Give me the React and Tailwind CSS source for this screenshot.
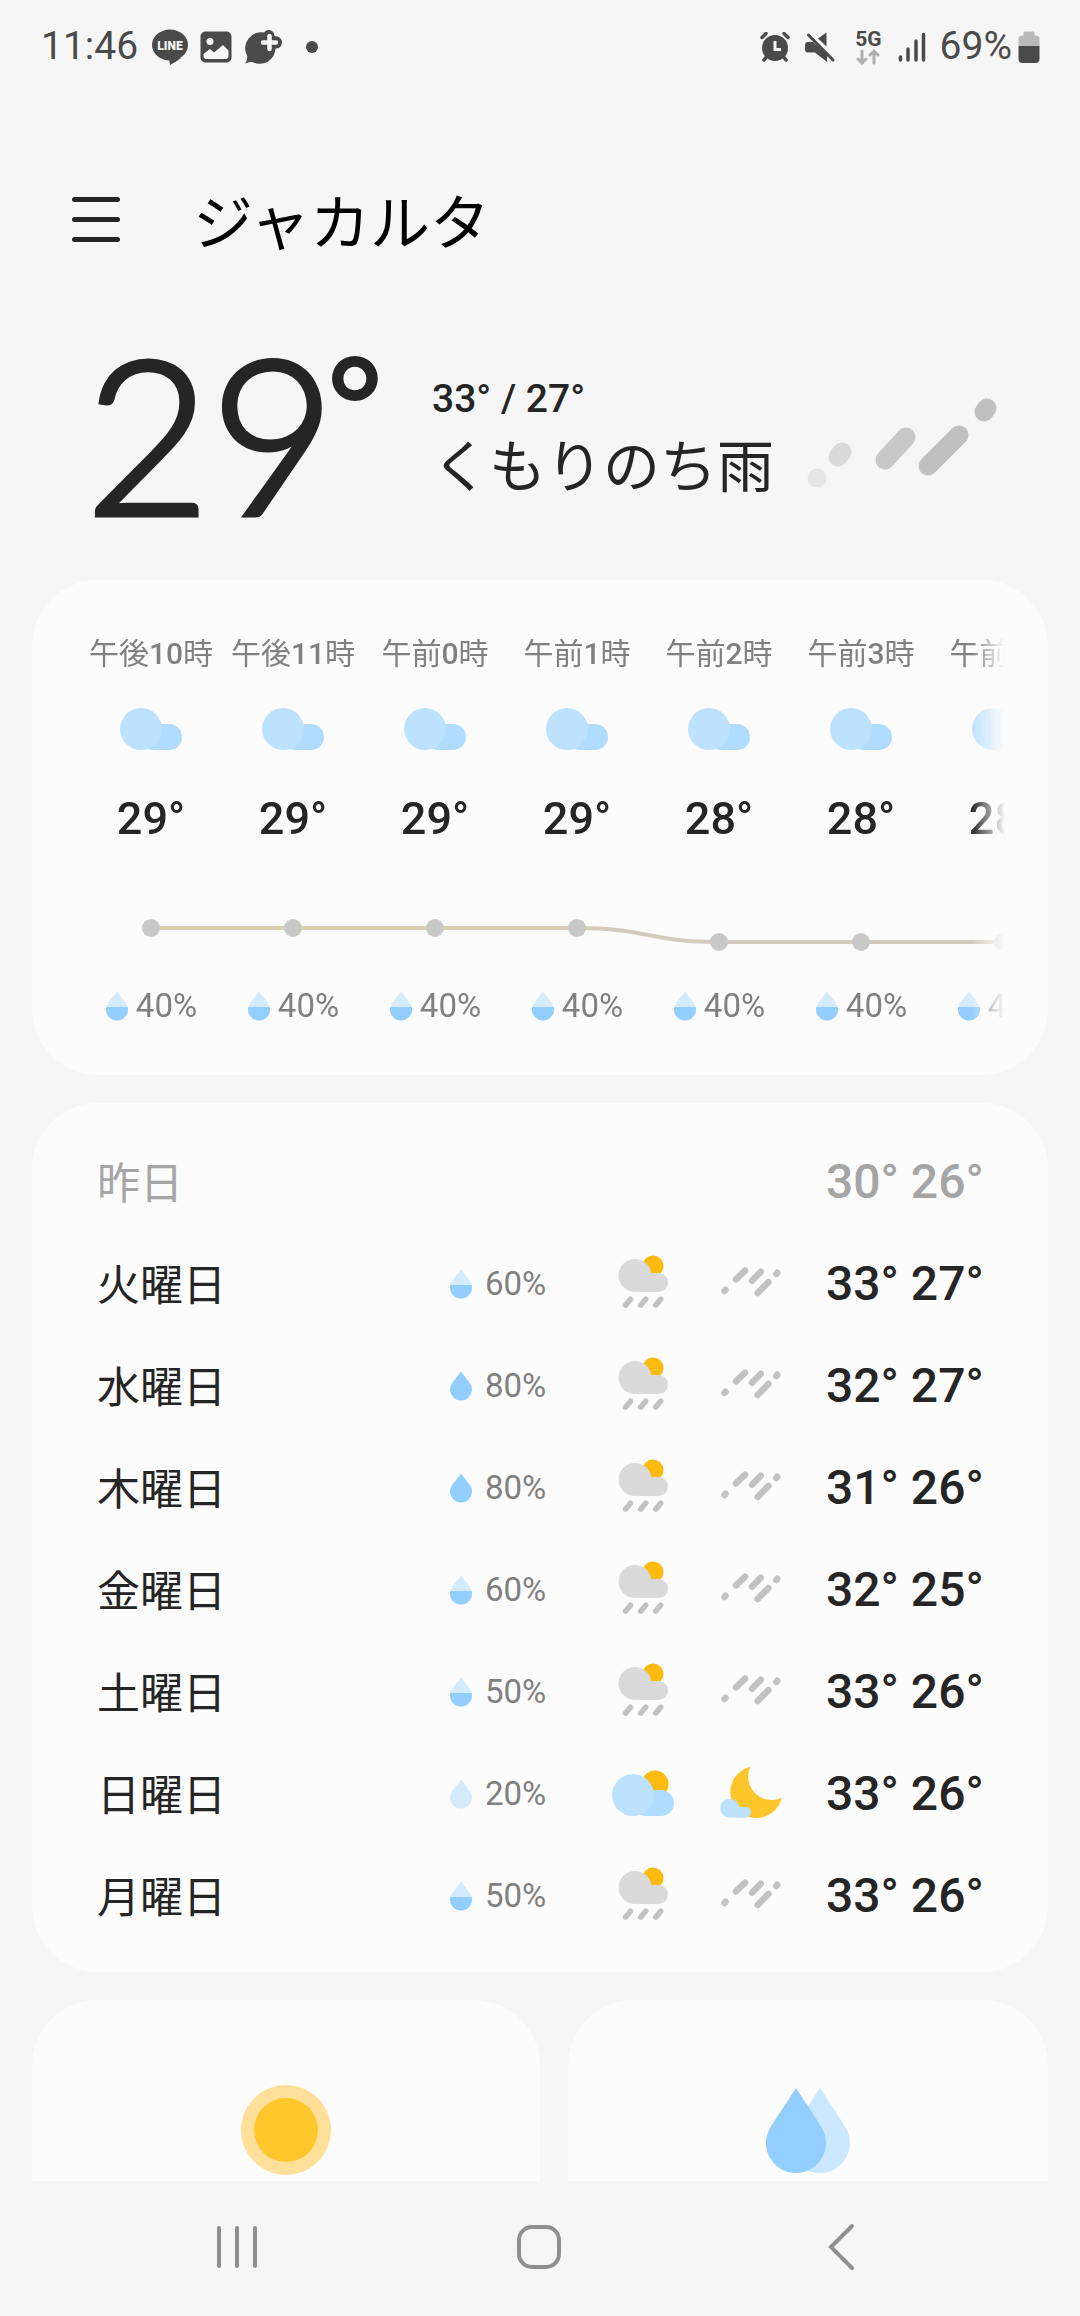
import React from 'react';

const hours = [
  { period: '午後', hour: 10, temp: 29, rain: 40 },
  { period: '午後', hour: 11, temp: 29, rain: 40 },
  { period: '午前', hour: 0, temp: 29, rain: 40 },
  { period: '午前', hour: 1, temp: 29, rain: 40 },
  { period: '午前', hour: 2, temp: 28, rain: 40 },
  { period: '午前', hour: 3, temp: 28, rain: 40 },
  { period: '午前', hour: 4, temp: 28, rain: 40 }
];

const days = [
  { name: '昨日', high: 30, low: 26, past: true },
  { name: '火曜日', rain: 60, day: 'sunShower', night: 'rain', high: 33, low: 27 },
  { name: '水曜日', rain: 80, day: 'sunShower', night: 'rain', high: 32, low: 27 },
  { name: '木曜日', rain: 80, day: 'sunShower', night: 'rain', high: 31, low: 26 },
  { name: '金曜日', rain: 60, day: 'sunShower', night: 'rain', high: 32, low: 25 },
  { name: '土曜日', rain: 50, day: 'sunShower', night: 'rain', high: 33, low: 26 },
  { name: '日曜日', rain: 20, day: 'partlySunny', night: 'moonCloud', high: 33, low: 26 },
  { name: '月曜日', rain: 50, day: 'sunShower', night: 'rain', high: 33, low: 26 }
];

const Cloud = () => (
  <>
    <rect x="22" y="28" width="41" height="26" rx="13" fill="#b0ddff" />
    <circle cx="22" cy="33" r="21" fill="#bde2ff" />
  </>
);

const drawings = {
  cloudy: <Cloud />,
  partlySunny: (
    <>
      <circle cx="44" cy="22" r="13.5" fill="#ffbb0d" />
      <Cloud />
    </>
  ),
  sunShower: (
    <>
      <circle cx="42" cy="14" r="10.5" fill="#ffbb0d" />
      <g fill="#dadada">
        <circle cx="24" cy="23.5" r="16.5" />
        <rect x="20" y="21" width="37" height="19" rx="9.5" />
      </g>
      <path
        d="M14.5 53.2l5-6M29.7 53.2l5-6M44.7 53.2l5-6"
        stroke="#c2c2c2"
        strokeWidth="5.5"
        strokeLinecap="round"
      />
    </>
  ),
  rain: (
    <path
      d="M5.5 39l1-1.2M17 27.3l9-8.7M33 28.7l8.7-9M38.6 41l10.8-11M57.3 22l1-1.2"
      stroke="#c2c2c2"
      strokeWidth="6.5"
      strokeLinecap="round"
    />
  ),
  moonCloud: (
    <>
      <path d="M31.3 4.7A26 26 0 1 0 62.7 35.7A23.5 23.5 0 0 1 31.3 4.7Z" fill="#ffc62b" />
      <g fill="#bde2ff">
        <circle cx="10.7" cy="46.2" r="9.5" />
        <rect x="8" y="44.7" width="24" height="11" rx="5.5" />
      </g>
    </>
  )
};

const WeatherIcon = ({ name }) => (
  <svg viewBox="0 0 64 64" fill="none" className="w-16 h-16 shrink-0" aria-hidden="true">
    {drawings[name]}
  </svg>
);

// Drop is empty up to 30%, half full up to 70%, then full
const RainDrop = ({ value }) => (
  <svg viewBox="0 0 24 30" className="w-6 h-[30px] shrink-0" aria-hidden="true">
    <path
      d="M12 .5L20.7 11.8A11 11 0 1 1 3.3 11.8Z"
      fill={value > 70 ? '#92ceff' : '#d4ebfd'}
    />
    {value > 30 && value <= 70 && (
      <path d="M1.3 16H22.7A11 11 0 1 1 1.3 16Z" fill="#92ceff" />
    )}
  </svg>
);

const StatusBar = () => (
  <div className="flex items-center h-[90px] pt-[3px] pl-[41px] pr-10 text-[39px] leading-none text-[#4a4a4a]">
    <span>11:46</span>
    <svg viewBox="0 0 36 36" className="w-9 h-9 ml-[14px]" aria-hidden="true">
      <ellipse cx="18" cy="16" rx="18" ry="15.5" fill="#4a4a4a" />
      <path d="M17 29h12q-5 4-11 7z" fill="#4a4a4a" />
      <text x="18" y="20.5" textAnchor="middle" fontSize="12" fontWeight="900" fill="#f6f6f6">LINE</text>
    </svg>
    <svg viewBox="0 0 32 32" className="w-8 h-8 ml-3" aria-hidden="true">
      <rect x=".5" y=".5" width="31" height="31" rx="5" fill="#4a4a4a" />
      <circle cx="10" cy="10.5" r="3.5" fill="#f6f6f6" />
      <path d="M3.5 23l6.500-5 4 3.500 9-7.500 5.500 5.500v5.500q0 3-3 3h-19q-3 0-3-3z" fill="#f6f6f6" />
    </svg>
    <svg viewBox="0 0 38 34" className="w-[38px] h-[34px] ml-3" aria-hidden="true">
      <path
        d="M1 33.500q3-4 2-8A16 16 0 0 1 20 2.500q3-3.500 7-2 3 1 3.500 5.500 7 0 7.500 6.500-.5 6-6.500 6A16 15.500 0 0 1 8 32q-3-.5-7 1.500z"
        fill="#4a4a4a"
      />
      <path d="M25.500 6v13M19 12.500h13" stroke="#f6f6f6" strokeWidth="4.5" strokeLinecap="round" />
    </svg>
    <span className="w-3 h-3 ml-6 rounded-full bg-[#4a4a4a]" />

    <svg viewBox="0 0 30 30" className="w-[30px] h-[30px] ml-auto" fill="none" stroke="#4a4a4a" aria-hidden="true">
      <circle cx="15" cy="16" r="13" fill="#4a4a4a" stroke="none" />
      <path d="M2 5.500l4-4M28 5.500l-4-4" strokeWidth="3.5" strokeLinecap="round" />
      <path d="M7 24l-3 4M23 24l3 4" strokeWidth="3.5" strokeLinecap="round" />
      <path d="M15 9v8.500h6" stroke="#f6f6f6" strokeWidth="3" />
    </svg>
    <svg viewBox="0 0 30 30" className="w-[30px] h-[30px] ml-[15px]" fill="#4a4a4a" aria-hidden="true">
      <path d="M0 13q0-3 3-3h5l14 13v7l-12-9.500H3q-3 0-3-3zM13 6.500l8.500-6v14z" />
      <path d="M3.500 3L28 28" stroke="#4a4a4a" strokeWidth="3" strokeLinecap="round" />
    </svg>
    <div className="flex flex-col items-center ml-5 text-[21px] leading-[20px] font-bold">
      5G
      <svg viewBox="0 0 24 16" className="w-6 h-4" fill="none" stroke="#b0b0b0" strokeWidth="3" strokeLinecap="round" aria-hidden="true">
        <path d="M6 2v12M2 10l4 4 4-4M18 14V2M14 6l4-4 4 4" />
      </svg>
    </div>
    <svg viewBox="0 0 28 30" className="w-7 h-[30px] ml-4" stroke="#4a4a4a" strokeWidth="3.5" strokeLinecap="round" aria-hidden="true">
      <path d="M2.500 25v3M10 17v11M18 9v19M25.500 2.500V28" />
    </svg>
    <span className="ml-[14px]">69%</span>
    <svg viewBox="0 0 22 32" className="w-[22px] h-8 ml-[6px]" aria-hidden="true">
      <path d="M.5 15V8q0-3 3-3.500h2V2q0-1.500 1.500-1.500h8q1.500 0 1.500 1.500v2.500h2q3 .5 3 3.500v7z" fill="#b9b9b9" />
      <path d="M.5 15h21v13q0 4-4 4h-13q-4 0-4-4z" fill="#4a4a4a" />
    </svg>
  </div>
);

const Header = () => (
  <header className="flex items-center h-[258px] pl-[72px] gap-[73px]">
    <button type="button" aria-label="メニュー" className="flex flex-col gap-[15px]">
      <span className="block w-12 h-[5px] rounded-full bg-[#252525]" />
      <span className="block w-12 h-[5px] rounded-full bg-[#252525]" />
      <span className="block w-12 h-[5px] rounded-full bg-[#252525]" />
    </button>
    <h1 className="pt-3 text-[60px] leading-[72px] text-black">ジャカルタ</h1>
  </header>
);

const CurrentWeather = () => (
  <section className="flex items-center h-[232px] pl-[85px] pr-[83px] pb-11">
    <p className="flex items-start pb-5 font-['Lato'] leading-[176px]">
      <span className="font-light text-[216px] [-webkit-text-stroke:5px_#252525]">29</span>
      <span className="-ml-2 text-[132px] leading-[116px] font-bold">°</span>
    </p>
    <div className="ml-auto">
      <p className="mb-[3px] text-[39px] leading-[48px] font-medium">33° / 27°</p>
      <p className="text-[57px] leading-[84px] whitespace-nowrap">くもりのち雨</p>
    </div>
    <svg viewBox="0 0 192 90" className="w-48 h-[90px] ml-[31px] shrink-0" fill="none" strokeWidth="19" strokeLinecap="round" aria-hidden="true">
      <path d="M12 81l.1 0" stroke="#e6e6e6" />
      <path d="M33 60l4-5" stroke="#dadada" />
      <path d="M80 63l21-23" stroke="#c8c8c8" />
      <path d="M123 69l31-31" stroke="#c0c0c0" />
      <path d="M179 15l3-4" stroke="#c0c0c0" />
    </svg>
  </section>
);

const lineColors = ['#dccfb0', '#dccfb0', '#d8ceb4', '#d3ccba', '#d2cbbb', '#d2cbbb', '#d2cbbb'];

// One chart step: the dot of this hour and the curve to the next one
const ChartStep = ({ index }) => {
  const y = (temp) => 20 + (29 - temp) * 14;
  const from = y(hours[index].temp);
  const to = y((hours[index + 1] || hours[index]).temp);
  return (
    <svg viewBox="0 0 142 54" className="w-[142px] h-[54px] mt-[61px] overflow-visible" aria-hidden="true">
      <path
        d={`M71 ${from}C142 ${from} 142 ${to} 213 ${to}`}
        fill="none"
        stroke={lineColors[index]}
        strokeWidth="4"
      />
      <circle cx="71" cy={from} r="9" fill="#c8c8c8" />
    </svg>
  );
};

const HourlyCard = () => (
  <section className="rounded-[66px] bg-[#fcfcfc] pt-[54px] pb-[49px] pl-12 pr-[43px]">
    <ul className="flex overflow-hidden [mask-image:linear-gradient(to_right,black_calc(100%-34px),transparent)]">
      {hours.map((hour, index) => (
        <li key={hour.hour} className="flex flex-col items-center w-[142px] shrink-0">
          <p className="mb-[22px] text-[30px] leading-[40px] text-[#808080] whitespace-nowrap">
            {hour.period}<span className="font-medium">{hour.hour}</span>時
          </p>
          <WeatherIcon name="cloudy" />
          <p className="mt-[31px] text-[45px] leading-[56px] font-medium">{hour.temp}°</p>
          <ChartStep index={index} />
          <p className="flex items-center gap-[7px] mt-6 text-[33px] leading-[40px] text-[#808080]">
            <RainDrop value={hour.rain} />
            {hour.rain}%
          </p>
        </li>
      ))}
    </ul>
  </section>
);

const DailyCard = () => (
  <section className="rounded-[66px] bg-[#fcfcfc] pt-7 pb-[25px] px-[65px]">
    <table className="w-full table-fixed">
      <tbody>
        {days.map((day) => (
          <tr key={day.name} className={day.past ? 'h-[102px] text-[#a5a5a5]' : 'h-[102px]'}>
            <th scope="row" className="p-0 pt-1 text-left text-[43px] leading-[56px] font-normal">{day.name}</th>
            <td className="w-[162px] p-0">
              {day.rain && (
                <div className="flex items-center gap-3 text-[33px] leading-[40px] text-[#808080]">
                  <RainDrop value={day.rain} />
                  {day.rain}%
                </div>
              )}
            </td>
            <td className="w-[108px] p-0">{day.day && <WeatherIcon name={day.day} />}</td>
            <td className="w-[107px] p-0">{day.night && <WeatherIcon name={day.night} />}</td>
            <td className="w-[157px] p-0 text-[48px] leading-[56px] font-medium whitespace-nowrap">
              {day.high}° {day.low}°
            </td>
          </tr>
        ))}
      </tbody>
    </table>
  </section>
);

const DetailCards = () => (
  <div className="grid grid-cols-[127fr_120fr] gap-7">
    <section className="flex justify-center h-[400px] pt-[85px] rounded-[66px] bg-[#fcfcfc]">
      <svg viewBox="0 0 90 90" className="w-[90px] h-[90px]" aria-hidden="true">
        <circle cx="45" cy="45" r="45" fill="#ffe09b" />
        <circle cx="45" cy="45" r="32" fill="#ffc72b" />
      </svg>
    </section>
    <section className="flex justify-center h-[400px] pt-[88px] rounded-[66px] bg-[#fcfcfc]">
      <svg viewBox="0 0 84 85" className="w-[84px] h-[85px]" aria-hidden="true">
        <path d="M54 0L79.100 38.600A30 30 0 1 1 28.900 38.600Z" fill="#cce8ff" />
        <path d="M30 0L55.100 38.600A30 30 0 1 1 4.900 38.600Z" fill="#92ceff" />
      </svg>
    </section>
  </div>
);

const NavBar = () => (
  <nav className="flex items-center justify-center h-[135px] pb-1 pr-[2px] shrink-0 bg-[#f6f6f6]">
    <button type="button" aria-label="履歴" className="flex justify-center w-[302px]">
      <svg viewBox="0 0 48 48" className="w-12 h-12" stroke="#8f8f8f" strokeWidth="4" strokeLinecap="round">
        <path d="M6 5v38M24 5v38M42 5v38" />
      </svg>
    </button>
    <button type="button" aria-label="ホーム" className="flex justify-center w-[302px]">
      <svg viewBox="0 0 48 48" className="w-12 h-12" fill="none" stroke="#8f8f8f" strokeWidth="4">
        <rect x="4" y="4" width="40" height="40" rx="13" />
      </svg>
    </button>
    <button type="button" aria-label="戻る" className="flex justify-center w-[302px]">
      <svg viewBox="0 0 48 48" className="w-12 h-12" fill="none" stroke="#8f8f8f" strokeWidth="4" strokeLinecap="round">
        <path d="M35 3L14 24l21 21" />
      </svg>
    </button>
  </nav>
);

export default function App() {
  return (
    <div className="flex flex-col h-screen overflow-hidden bg-[#f6f6f6] text-[#252525] font-['Roboto','Noto_Sans_CJK_JP',sans-serif]">
      <main className="flex-1 min-h-0 overflow-hidden">
        <StatusBar />
        <Header />
        <CurrentWeather />
        <div className="flex flex-col gap-7 px-8">
          <HourlyCard />
          <DailyCard />
          <DetailCards />
        </div>
      </main>
      <NavBar />
    </div>
  );
}
